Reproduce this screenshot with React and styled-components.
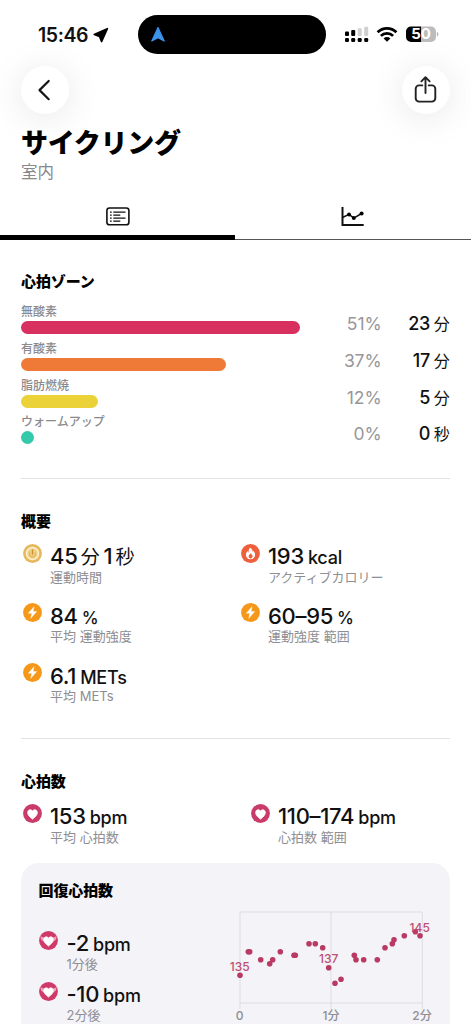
import React from "react";
import styled, { createGlobalStyle } from "styled-components";

const GlobalStyle = createGlobalStyle`
  * {
    box-sizing: border-box;
  }

  body {
    margin: 0;
    background: #fff;
    color: #111;
    font-family: Inter, "Noto Sans CJK JP", sans-serif;
    -webkit-font-smoothing: antialiased;
  }
`;

const zones = [
  { name: "無酸素", percent: 51, time: "23", unit: "分", width: 279, color: "#d8305f" },
  { name: "有酸素", percent: 37, time: "17", unit: "分", width: 204.5, color: "#ef7a37" },
  { name: "脂肪燃焼", percent: 12, time: "5", unit: "分", width: 76.5, color: "#ebd238" },
  { name: "ウォームアップ", percent: 0, time: "0", unit: "秒", width: 13, color: "#35c9ab" },
];

const summary = [
  { icon: "timer", parts: [["45"], ["分", "kanji"], ["1"], ["秒", "kanji"]], label: "運動時間" },
  { icon: "flame", parts: [["193"], ["kcal", "unit"]], label: "アクティブカロリー" },
  { icon: "bolt", parts: [["84"], ["%", "percent"]], label: "平均 運動強度" },
  { icon: "bolt", parts: [["60–95"], ["%", "percent"]], label: "運動強度 範囲" },
  { icon: "bolt", parts: [["6.1"], ["METs", "unit"]], label: "平均 METs" },
];

const heartRate = [
  { icon: "heart", parts: [["153"], ["bpm", "unit"]], label: "平均 心拍数" },
  { icon: "heart", parts: [["110–174"], ["bpm", "unit"]], label: "心拍数 範囲" },
];

const recovery = [
  { icon: "recovery", parts: [["-2"], ["bpm", "unit"]], label: "1分後" },
  { icon: "recovery", parts: [["-10"], ["bpm", "unit"]], label: "2分後" },
];

// x, y inside the 210 x 119 chart
const points = [
  [15, 70.3], [23.3, 46.7], [24.7, 46.7], [35.7, 54.7], [44.7, 58.7],
  [47.7, 54.7], [55.3, 46.7], [69, 50.3], [70.3, 50.3], [84, 38.7],
  [90.3, 38.7], [97.7, 42.7], [103.7, 62.7], [110, 78.3], [116, 74.3],
  [129.3, 50.3], [131, 54.7], [138.7, 54.7], [152.3, 54.7], [160, 42.7],
  [167.3, 38.7], [169, 34.7], [179.3, 30.7], [190.3, 26.7], [195, 30.7],
];

const HEART =
  "M9.5 15.1C6.3 12.7 4.7 10.7 4.7 8.6c0-1.7 1.1-2.8 2.5-2.8 1 0 1.8.5 2.3 1.4.5-.9 1.3-1.4 2.3-1.4 1.4 0 2.5 1.1 2.5 2.8 0 2.1-1.6 4.1-4.8 6.5z";

const icons = {
  timer: (
    <>
      <circle cx="9.5" cy="9.5" r="9.4" fill="#e5b95e" />
      <circle cx="9.5" cy="9.5" r="6" fill="#efcf86" stroke="#fff3cf" strokeWidth="1.5" />
      <path d="M9.5 6v4" stroke="#c4922f" strokeWidth="1.3" strokeLinecap="round" />
      <path d="M7 8.6a2.9 2.9 0 1 0 5 0" fill="none" stroke="#d9ac50" strokeWidth="1" />
    </>
  ),
  flame: (
    <>
      <circle cx="9.5" cy="9.5" r="9.4" fill="#ee603d" />
      <path
        d="M9 3.7c2.7 1.2 2.5 3.1 2.8 4.3.3-.3.5-.8.5-1.3 1.2 1.2 1.8 2.6 1.8 4 0 2.7-1.9 4.6-4.6 4.6s-4.6-1.9-4.6-4.5c0-1.5.8-2.7 1.7-3.7.1.8.4 1.3.9 1.6.1-2 .3-3.8 1.5-5z"
        fill="#fff"
      />
      <path
        d="M9.9 8.8c-.2 1.4-2.3 1.9-2.3 3.7 0 1.1.9 1.9 2 1.9s2-.8 2-1.9c0-1-.5-1.5-.9-2-.3-.4-.7-.9-.8-1.7z"
        fill="#ee603d"
      />
    </>
  ),
  bolt: (
    <>
      <circle cx="9.5" cy="9.5" r="9.4" fill="#f5981a" />
      <path d="M11 3.7 5.3 10.3h3.5L7.8 15.3 13.7 8.6h-3.6z" fill="#fff" stroke="#fff" strokeWidth=".4" strokeLinejoin="round" />
    </>
  ),
  heart: (
    <>
      <circle cx="9.5" cy="9.5" r="9.4" fill="#c93c69" />
      <path d={HEART} fill="#fff" stroke="#fff" strokeWidth=".9" />
    </>
  ),
  recovery: (
    <>
      <circle cx="9.5" cy="9.5" r="9.4" fill="#cf3a68" />
      <path d="M1.2 5.2 5 6.5l2 1.7 2.5 1 2.5-1 2-1.7 3.800-1.300-1 3.600-2.800 2H5L2.200 8.800z" fill="#e9a3b9" />
      <path d={HEART} fill="#fff" stroke="#fff" strokeWidth=".7" />
    </>
  ),
};

const Metric = ({ icon, parts, label }) => (
  <MetricBox>
    <MetricIcon viewBox="0 0 19 19">{icons[icon]}</MetricIcon>
    <div>
      <MetricValue>
        {parts.map(([text, kind = "number"]) => (
          <MetricPart key={text} $kind={kind}>
            {text}
          </MetricPart>
        ))}
      </MetricValue>
      <MetricLabel>{label}</MetricLabel>
    </div>
  </MetricBox>
);

const StatusIcons = () => (
  <svg width="98" height="20" viewBox="0 0 98 20">
    <g fill="#000">
      <rect x="1" y="6.5" width="4" height="4.6" rx="1.1" />
      <rect x="7.2" y="5" width="4" height="6.1" rx="1.1" />
      <rect x="1" y="13" width="4" height="4" rx="1.2" />
      <rect x="7.2" y="13" width="4" height="4" rx="1.2" />
      <rect x="13.7" y="13" width="4" height="4" rx="1.2" />
      <rect x="20.2" y="13" width="4" height="4" rx="1.2" />
    </g>
    <g fill="#d0d0d0">
      <rect x="13.7" y="3.2" width="4" height="7.9" rx="1.1" />
      <rect x="20.2" y="1.7" width="4" height="9.4" rx="1.1" />
    </g>
    <g fill="none" stroke="#000" strokeWidth="2.7">
      <path d="M33.6 7.3a13.1 13.1 0 0 1 18.8 0" />
      <path d="M36.9 10.9a8.5 8.5 0 0 1 12.2 0" />
    </g>
    <path d="M43 16.7 39.6 13.4a4.9 4.9 0 0 1 6.8 0z" fill="#000" />
    <path d="M77 1.5H67a5 5 0 0 0-5 5v5.5a5 5 0 0 0 5 5h10z" fill="#000" />
    <path d="M77 1.5h10a5 5 0 0 1 5 5v5.5a5 5 0 0 1-5 5H77z" fill="#bcbcbc" />
    <path d="M92.800 7c2.300.4 2.300 4.200 0 4.600z" fill="#bcbcbc" />
    <BatteryText x="77" y="14.3">
      50
    </BatteryText>
  </svg>
);

const RecoveryChart = () => (
  <Chart width="210" height="119" viewBox="0 0 210 119">
    <path
      d="M15 104V7h182.3v97M106 7v97M15 98h182.3"
      fill="none"
      stroke="#dedde2"
      strokeWidth="1"
    />
    {points.map(([x, y]) => (
      <circle key={`${x}-${y}`} cx={x} cy={y} r="2.8" fill="#b83a62" />
    ))}
    <ChartValue x="14.7" y="66.2">135</ChartValue>
    <ChartValue x="103.7" y="58.3">137</ChartValue>
    <ChartValue x="194.7" y="26.7">145</ChartValue>
    <ChartTick x="14.7" y="115">0</ChartTick>
    <ChartTick x="106" y="115">1分</ChartTick>
    <ChartTick x="197" y="115">2分</ChartTick>
  </Chart>
);

const App = () => (
  <Screen>
    <GlobalStyle />
    <StatusBar>
      <Clock>15:46</Clock>
      <svg width="16" height="16" viewBox="0 0 16 16">
        <path d="M14.300 1.700 1.300 7.500 6.600 9.400 8.600 14.500z" fill="#000" stroke="#000" strokeWidth="1.800" strokeLinejoin="round" />
      </svg>
      <Island>
        <svg width="16" height="17" viewBox="0 0 16 17">
          <path d="M8 1.5 1.8 15 8 11.6 14.2 15z" fill="#3d92ea" stroke="#3d92ea" strokeWidth="1.2" strokeLinejoin="round" />
        </svg>
      </Island>
      <StatusIcons />
    </StatusBar>

    <NavBar>
      <RoundButton aria-label="戻る">
        <svg width="24" height="24" viewBox="0 0 24 24">
          <path d="M15.7 3 6.5 12.1l9.2 9.1" fill="none" stroke="#151515" strokeWidth="2.2" strokeLinecap="round" strokeLinejoin="round" />
        </svg>
      </RoundButton>
      <RoundButton aria-label="共有">
        <svg width="24" height="28" viewBox="0 0 24 28">
          <g fill="none" stroke="#222" strokeWidth="1.9" strokeLinecap="round" strokeLinejoin="round">
            <path d="M8.3 9.4H5.1a3.4 3.4 0 0 0-3.4 3.4v9.400a3.400 3.400 0 0 0 3.400 3.400h12.800a3.400 3.400 0 0 0 3.400-3.400v-9.400a3.400 3.400 0 0 0-3.400-3.400h-3.200" />
            <path d="M11.500 17V1.400M7.400 5.300l4.100-4.100 4.100 4.100" />
          </g>
        </svg>
      </RoundButton>
    </NavBar>

    <Title>サイクリング</Title>
    <Subtitle>室内</Subtitle>

    <Tabs>
      <Tab $active>
        <svg width="26" height="22" viewBox="0 0 26 22">
          <rect x="1.9" y="2" width="22" height="16.8" rx="2.6" fill="none" stroke="#111" strokeWidth="1.6" />
          <path d="M8.3 6.2h12.2M8.3 9.1h7M8.3 12.1h12.2M8.3 15.1h7" stroke="#111" strokeWidth="1.2" />
          <path d="M5 6.2h1.7M5 9.1h1.7M5 12.1h1.7M5 15.1h1.7" stroke="#111" strokeWidth="1.2" />
        </svg>
      </Tab>
      <Tab>
        <svg width="26" height="22" viewBox="0 0 26 22">
          <path d="M2.5 1v18h21.2" fill="none" stroke="#111" strokeWidth="2" />
          <path d="M2.5 11.5 9 8.4l4.8 3.7 7.8-4.6" fill="none" stroke="#111" strokeWidth="1.5" />
          <circle cx="9" cy="8.5" r="2" />
          <circle cx="13.8" cy="12.1" r="2" />
          <circle cx="21.6" cy="7.5" r="2" />
        </svg>
      </Tab>
    </Tabs>

    <ZoneSection>
      <Heading>心拍ゾーン</Heading>
      <ZoneList>
        {zones.map((zone) => (
          <Zone key={zone.name}>
            <div>
              <ZoneName>{zone.name}</ZoneName>
              <ZoneBar $color={zone.color} style={{ width: zone.width }} />
            </div>
            <ZonePercent>{zone.percent}%</ZonePercent>
            <ZoneTime>
              {zone.time}
              <ZoneUnit>{zone.unit}</ZoneUnit>
            </ZoneTime>
          </Zone>
        ))}
      </ZoneList>
    </ZoneSection>

    <SummarySection>
      <Heading>概要</Heading>
      <MetricGrid $first="218px">
        {summary.map((item) => (
          <Metric key={item.label} {...item} />
        ))}
      </MetricGrid>
    </SummarySection>

    <HeartSection>
      <Heading>心拍数</Heading>
      <MetricGrid $first="228px">
        {heartRate.map((item) => (
          <Metric key={item.label} {...item} />
        ))}
      </MetricGrid>
    </HeartSection>

    <Card>
      <Heading>回復心拍数</Heading>
      <CardBody>
        <RecoveryList>
          {recovery.map((item) => (
            <Metric key={item.label} {...item} />
          ))}
        </RecoveryList>
        <RecoveryChart />
      </CardBody>
    </Card>
  </Screen>
);

const Screen = styled.main`
  width: 471px;
  height: 1024px;
  overflow: hidden;
  background: #fff;
`;

const StatusBar = styled.header`
  display: flex;
  align-items: center;
  height: 66px;
  padding: 3px 0 0 38px;
`;

const Clock = styled.span`
  width: 55px;
  font-size: 19.5px;
  font-weight: 600;
  letter-spacing: -0.4px;
`;

const Island = styled.div`
  display: flex;
  align-items: center;
  width: 188px;
  height: 39px;
  margin: 0 18px 0 29px;
  padding-left: 12px;
  border-radius: 20px;
  background: #000;

  svg {
    margin-bottom: 1px;
  }
`;

const BatteryText = styled.text`
  font-size: 15px;
  font-weight: 700;
  text-anchor: middle;
  fill: #fff;
`;

const NavBar = styled.nav`
  display: flex;
  justify-content: space-between;
  height: 48px;
  padding: 0 21px;
`;

const RoundButton = styled.button`
  display: flex;
  align-items: center;
  justify-content: center;
  width: 48px;
  height: 48px;
  padding: 0;
  border: 0;
  border-radius: 50%;
  background: #fff;
  box-shadow: 0 4px 36px rgba(0, 0, 0, 0.1);
`;

const Title = styled.h1`
  height: 44px;
  margin: 8px 0 0 21px;
  font-size: 27px;
  font-weight: 900;
  line-height: 44px;
  letter-spacing: -0.3px;
  color: #000;
`;

const Subtitle = styled.p`
  height: 20px;
  margin: -4px 0 0 21px;
  font-size: 16.5px;
  line-height: 20px;
  color: #88888d;
`;

const Tabs = styled.div`
  display: grid;
  grid-template-columns: 235px 236px;
  height: 58px;
`;

const Tab = styled.div`
  display: flex;
  justify-content: center;
  align-items: flex-start;
  padding-top: 24px;
  border-bottom: ${(props) => (props.$active ? "5px solid #000" : "1.5px solid #555")};
`;

const Heading = styled.h2`
  height: 20px;
  margin: 0;
  font-size: 15px;
  font-weight: 900;
  line-height: 20px;
  letter-spacing: -0.1px;
  color: #000;
`;

const ZoneSection = styled.section`
  height: 239px;
  margin: 0 21px;
  padding-top: 32px;
  border-bottom: 1px solid #e2e2e4;
`;

const SummarySection = styled.section`
  height: 260px;
  margin: 0 21px;
  padding-top: 33px;
  border-bottom: 1px solid #e2e2e4;
`;

const HeartSection = styled.section`
  height: 124px;
  margin: 0 21px;
  padding-top: 33px;
`;

const ZoneList = styled.div`
  padding-top: 12px;
`;

const Zone = styled.div`
  display: grid;
  grid-template-columns: 279px 81.5px 68px;
  height: 36.8px;
`;

const ZoneName = styled.div`
  height: 17px;
  font-size: 12px;
  line-height: 16px;
  font-weight: 500;
  color: #8a8a8e;
`;

const ZoneBar = styled.div`
  height: 13px;
  border-radius: 7px;
  background: ${(props) => props.$color};
`;

const ZonePercent = styled.div`
  padding-top: 8px;
  font-size: 17.5px;
  line-height: 24px;
  letter-spacing: -0.1px;
  text-align: right;
  color: #97979b;
`;

const ZoneTime = styled.div`
  padding-top: 8px;
  font-size: 18px;
  font-weight: 500;
  line-height: 24px;
  letter-spacing: -0.2px;
  text-align: right;
`;

const ZoneUnit = styled.span`
  margin-left: 3.5px;
  font-size: 16px;
  font-weight: 400;
`;

const MetricGrid = styled.div`
  display: grid;
  grid-template-columns: ${(props) => props.$first} 1fr;
  grid-auto-rows: 59.8px;
  padding-top: 10px;
`;

const MetricBox = styled.div`
  display: flex;
  padding-left: 1.5px;
`;

const MetricIcon = styled.svg`
  flex: none;
  width: 19px;
  height: 19px;
  margin: 1.5px 8.5px 0 0;
`;

const MetricValue = styled.div`
  display: flex;
  align-items: baseline;
  gap: 4px;
  height: 26.5px;
  line-height: 28px;
  white-space: nowrap;
`;

const partSizes = {
  number: "22px",
  kanji: "19px",
  unit: "18px",
  percent: "17px",
};

const MetricPart = styled.span`
  margin-left: ${(props) => (props.$kind === "kanji" ? "-0.7px" : 0)};
  font-size: ${(props) => partSizes[props.$kind]};
  font-weight: ${(props) => (props.$kind === "kanji" ? 400 : 500)};
  letter-spacing: ${(props) => (props.$kind === "unit" ? "-0.2px" : "-0.3px")};
`;

const MetricLabel = styled.div`
  height: 16px;
  font-size: 13px;
  line-height: 16px;
  color: #8e8e93;
  white-space: nowrap;
`;

const Card = styled.section`
  height: 220px;
  margin: 0 21px;
  padding: 18px 0 0 17.5px;
  border-radius: 18px;
  background: #f4f3f8;
`;

const CardBody = styled.div`
  display: flex;
  padding-top: 4px;
`;

const RecoveryList = styled.div`
  display: grid;
  grid-auto-rows: 51px;
  width: 187.5px;
  margin-left: -1px;
  padding-top: 24px;
`;

const Chart = styled.svg`
  display: block;
`;

const ChartValue = styled.text`
  font-size: 12px;
  font-weight: 500;
  text-anchor: middle;
  fill: #bd4f73;
`;

const ChartTick = styled.text`
  font-size: 12px;
  font-weight: 500;
  text-anchor: middle;
  fill: #8e8e93;
`;

export default App;
